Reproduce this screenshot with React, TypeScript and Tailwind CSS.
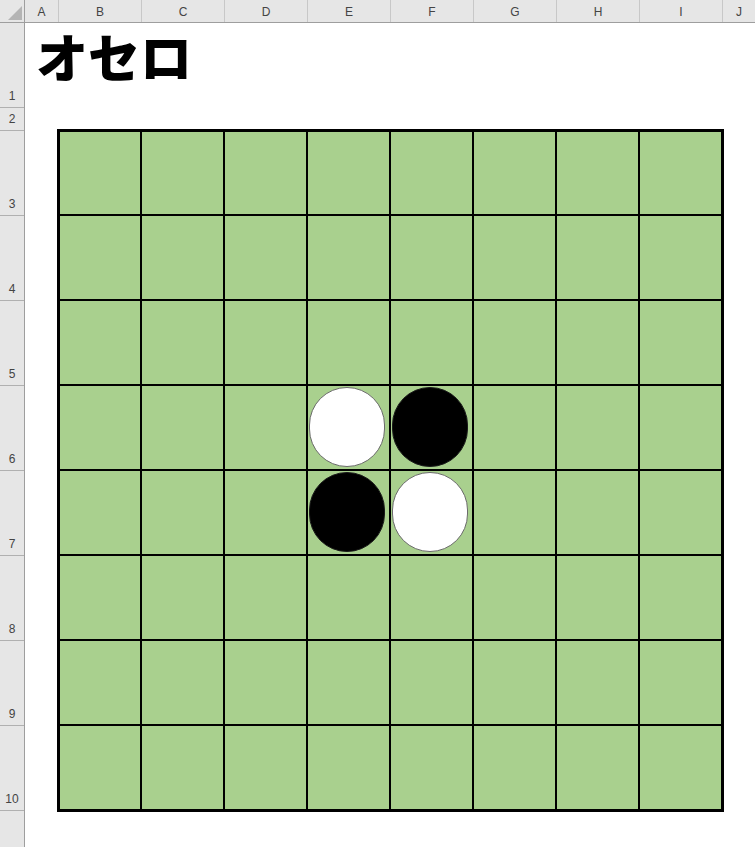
const COLS = ["B", "C", "D", "E", "F", "G", "H", "I"];
const ROWS: [string, string][] = [
  ["1", "h-[85px]"],
  ["2", "h-[23px]"],
  ["3", "h-[85px]"],
  ["4", "h-[85px]"],
  ["5", "h-[85px]"],
  ["6", "h-[85px]"],
  ["7", "h-[85px]"],
  ["8", "h-[85px]"],
  ["9", "h-[85px]"],
  ["10", "h-[85px]"],
];

// 0 empty, 1 white, 2 black
const BOARD: number[][] = [
  [0, 0, 0, 0, 0, 0, 0, 0],
  [0, 0, 0, 0, 0, 0, 0, 0],
  [0, 0, 0, 0, 0, 0, 0, 0],
  [0, 0, 0, 1, 2, 0, 0, 0],
  [0, 0, 0, 2, 1, 0, 0, 0],
  [0, 0, 0, 0, 0, 0, 0, 0],
  [0, 0, 0, 0, 0, 0, 0, 0],
  [0, 0, 0, 0, 0, 0, 0, 0],
];

const font = { fontFamily: '"Liberation Sans", "Noto Sans CJK JP", sans-serif' };

function Disc({ kind }: { kind: number }) {
  if (kind === 0) return null;
  return (
    <div
      className={
        kind === 1
          ? "ml-[1px] mt-[1px] h-[80px] w-[76px] rounded-full border border-[#6b6b6b] bg-white"
          : "ml-[1px] mt-[1px] h-[80px] w-[76px] rounded-full border border-[#1a1a1a] bg-black"
      }
    />
  );
}

export default function App() {
  return (
    <div className="h-[847px] w-[755px] overflow-hidden bg-white text-[12px] text-[#444]" style={font}>
      {/* column headers */}
      <div className="flex h-[23px] border-b border-[#9e9e9e] bg-[#e6e6e6]">
        <div className="relative w-[25px] border-r border-[#9e9e9e]">
          <div className="absolute bottom-[2px] right-[2px] h-0 w-0 border-b-[14px] border-l-[14px] border-b-[#b4b4b4] border-l-transparent" />
        </div>
        <div className="flex w-[34px] items-center justify-center border-r border-[#c8c8c8] pt-[1px]">A</div>
        {COLS.map((c) => (
          <div key={c} className="flex w-[83px] items-center justify-center border-r border-[#c8c8c8] pt-[1px]">
            {c}
          </div>
        ))}
        <div className="flex flex-1 items-center justify-center pt-[1px]">J</div>
      </div>

      <div className="flex">
        {/* row headers */}
        <div className="w-[25px] shrink-0 border-r border-[#9e9e9e] bg-[#e6e6e6]">
          {ROWS.map(([n, h]) => (
            <div key={n} className={`flex ${h} items-end justify-center border-b border-[#b0b0b0] pb-[2px]`}>
              {n}
            </div>
          ))}
          <div className="h-[40px]" />
        </div>

        {/* sheet */}
        <div className="flex-1">
          <div className="flex h-[85px] items-end pb-[26px] pl-[11px]">
            <h1
              className="text-[52px] font-black leading-none text-black"
              style={{ fontFamily: '"Noto Sans CJK JP", sans-serif' }}
            >
              オセロ
            </h1>
          </div>
          <div className="pl-[32px] pt-[21px]">
            <div className="grid w-fit grid-cols-[80px_repeat(7,81px)] grid-rows-[82px_repeat(7,83px)] gap-[2px] border-[3px] border-black bg-black">
              {BOARD.map((row, r) =>
                row.map((v, c) => (
                  <div key={`${r}-${c}`} className="bg-[#a9d08e]">
                    <Disc kind={v} />
                  </div>
                ))
              )}
            </div>
          </div>
        </div>
      </div>
    </div>
  );
}
